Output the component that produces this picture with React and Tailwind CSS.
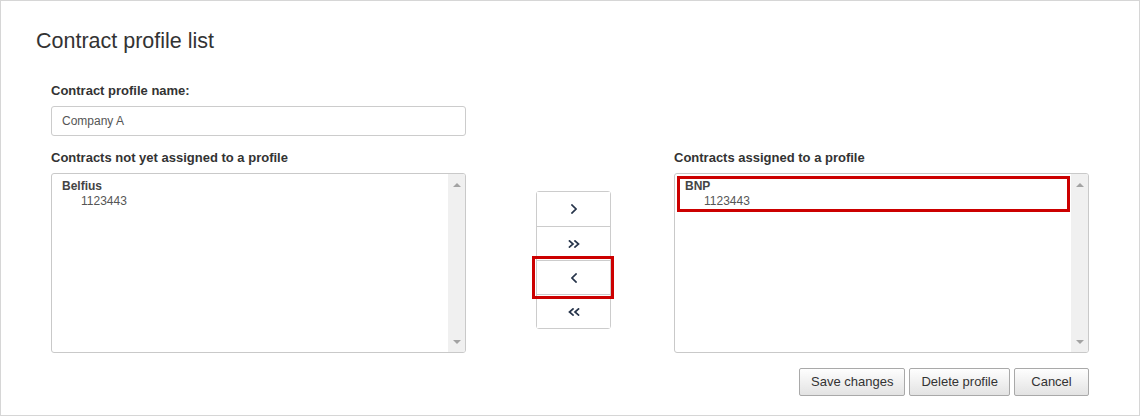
import React from "react";

function Chevron({ dir = "right", double = false }) {
  const flip = dir === "left" ? "scale(-1,1)" : undefined;
  if (double) {
    return (
      <svg width="12" height="8" viewBox="0 0 12 8" className="block">
        <g transform={flip} style={{ transformOrigin: "6px 4px" }} fill="none" stroke="#26344a" strokeWidth="1.7" strokeLinecap="square">
          <polyline points="1.5,1 5,4 1.5,7" />
          <polyline points="7,1 10.5,4 7,7" />
        </g>
      </svg>
    );
  }
  return (
    <svg width="6" height="10" viewBox="0 0 6 10" className="block">
      <g transform={flip} style={{ transformOrigin: "3px 5px" }} fill="none" stroke="#26344a" strokeWidth="1.7" strokeLinecap="square">
        <polyline points="1,1 5,5 1,9" />
      </g>
    </svg>
  );
}

function Scrollbar() {
  return (
    <div className="w-[17px] bg-[#f0f0f0] flex flex-col justify-between items-center pt-[9px] pb-[8px]">
      <svg width="8" height="4" viewBox="0 0 8 4"><polygon points="0,4 4,0 8,4" fill="#a3a3a3" /></svg>
      <svg width="8" height="4" viewBox="0 0 8 4"><polygon points="0,0 8,0 4,4" fill="#a3a3a3" /></svg>
    </div>
  );
}

function ListBox({ children, tight }) {
  return (
    <div className="h-[180px] border border-[#c9c9c9] rounded-[3px] flex overflow-hidden">
      <div className={tight ? "flex-1 pt-[2px] pl-[2px] pr-[1px]" : "flex-1 pt-[5px] pl-[10px]"}>{children}</div>
      <Scrollbar />
    </div>
  );
}

function ContractItem({ bank, number }) {
  return (
    <div className="text-[12px] leading-[15px]">
      <div className="font-bold text-[#444]">{bank}</div>
      <div className="pl-[19px] text-[#555]">{number}</div>
    </div>
  );
}

function Button({ children }) {
  return (
    <button className="h-[28px] min-w-[75px] px-[11px] border border-[#a9a9a9] rounded-[2px] bg-linear-to-b from-[#fefefe] to-[#e3e3e3] text-[13px] text-[#333]">
      {children}
    </button>
  );
}

export default function App() {
  const moves = [
    { dir: "right", double: false },
    { dir: "right", double: true },
    { dir: "left", double: false, marked: true },
    { dir: "left", double: true },
  ];

  return (
    <div className="w-[1140px] h-[417px] bg-white font-['Liberation_Sans',Arial,sans-serif] text-[#333]">
      <div className="h-[416px] border border-[#d6d6d6]">
        <h1 className="pl-[35px] pt-[28px] text-[21.5px] leading-[24px] text-[#333]">Contract profile list</h1>

        <div className="pl-[50px] pt-[29px] w-[1088px]">
          <div className="text-[13px] leading-[18px] font-bold">Contract profile name:</div>
          <input
            readOnly
            value="Company A"
            className="mt-[6px] h-[30px] w-[415px] border border-[#cccccc] rounded-[3px] px-[10px] text-[12px] text-[#555] outline-none"
          />

          <div className="flex mt-[13px]">
            <div className="w-[415px]">
              <div className="text-[13px] leading-[18px] font-bold">Contracts not yet assigned to a profile</div>
              <div className="mt-[6px]">
                <ListBox>
                  <ContractItem bank="Belfius" number="1123443" />
                </ListBox>
              </div>
            </div>

            <div className="ml-[70px] w-[75px] pt-[42px]">
              <div className="border border-[#cccccc] rounded-[3px]">
                {moves.map((m, i) => (
                  <div
                    key={i}
                    className={
                      "relative h-[34px] flex items-center justify-center bg-white" +
                      (i > 0 ? " border-t border-[#cccccc]" : "")
                    }
                  >
                    <Chevron dir={m.dir} double={m.double} />
                    {m.marked && (
                      <span className="absolute z-10 -left-[5px] -right-[4px] -top-[5px] -bottom-[5px] border-[3px] border-[#cc0000]" />
                    )}
                  </div>
                ))}
              </div>
            </div>

            <div className="ml-[63px] w-[415px]">
              <div className="text-[13px] leading-[18px] font-bold">Contracts assigned to a profile</div>
              <div className="mt-[6px]">
                <ListBox tight>
                  <div className="border-[3px] border-[#cc0000] pl-[5px]">
                    <ContractItem bank="BNP" number="1123443" />
                  </div>
                </ListBox>
              </div>
            </div>
          </div>

          <div className="flex justify-end gap-[4px] mt-[15px]">
            <Button>Save changes</Button>
            <Button>Delete profile</Button>
            <Button>Cancel</Button>
          </div>
        </div>
      </div>
    </div>
  );
}
